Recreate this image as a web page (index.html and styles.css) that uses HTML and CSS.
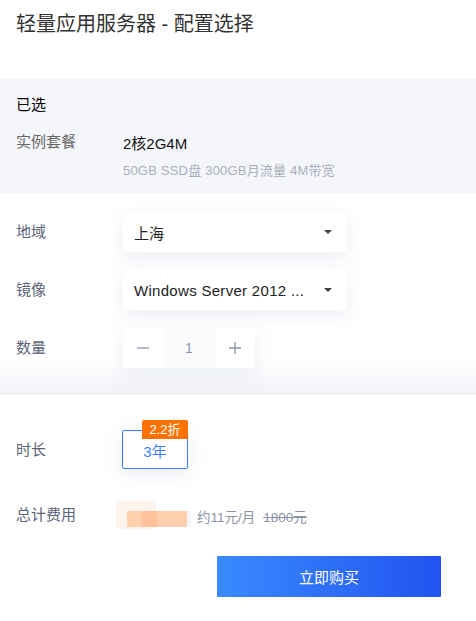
FILE: index.html
```html
<!DOCTYPE html>
<html lang="zh">
<head>
<meta charset="utf-8">
<link rel="stylesheet" href="styles.css">
</head>
<body>
<div class="page">
  <h1 class="title">轻量应用服务器 - 配置选择</h1>

  <section class="selected">
    <div class="sel-head">已选</div>
    <div class="sel-row">
      <div class="label">实例套餐</div>
      <div class="sel-info">
        <div class="plan">2核2G4M</div>
        <div class="plan-desc">50GB SSD盘 300GB月流量 4M带宽</div>
      </div>
    </div>
  </section>

  <section class="config">
    <div class="row">
      <div class="label label-blue">地域</div>
      <div class="select">
        <span class="select-text">上海</span>
        <span class="caret"></span>
      </div>
    </div>
    <div class="row">
      <div class="label label-blue">镜像</div>
      <div class="select">
        <span class="select-text latin">Windows Server 2012 ...</span>
        <span class="caret"></span>
      </div>
    </div>
    <div class="row">
      <div class="label label-blue">数量</div>
      <div class="stepper">
        <div class="step-btn">
          <svg width="14" height="14" viewBox="0 0 14 14"><path d="M1 7h12" stroke="#8a93a6" stroke-width="1.3"/></svg>
        </div>
        <div class="step-val">1</div>
        <div class="step-btn">
          <svg width="14" height="14" viewBox="0 0 14 14"><path d="M1 7h12M7 1v12" stroke="#8a93a6" stroke-width="1.3"/></svg>
        </div>
      </div>
    </div>
  </section>

  <section class="order">
    <div class="row row-duration">
      <div class="label label-blue">时长</div>
      <div class="duration">
        <span class="badge">2.2折</span>
        <span class="duration-text">3年</span>
      </div>
    </div>
    <div class="row row-total">
      <div class="label label-blue">总计费用</div>
      <div class="price">
        <span class="price-blur"><i class="pb pb1"></i><i class="pb pb2"></i><i class="pb pb3"></i><i class="pb pb4"></i></span>
        <span class="per-month">约11元/月</span>
        <span class="orig">1800元</span>
      </div>
    </div>
    <div class="actions">
      <button class="buy">立即购买</button>
    </div>
  </section>
</div>
</body>
</html>
```

FILE: styles.css
```css
* { box-sizing: border-box; }
html, body { margin: 0; padding: 0; background: #fff; }
body {
  font-family: "Liberation Sans", "Noto Sans CJK SC", sans-serif;
  color: #333;
  width: 476px;
  height: 621px;
  overflow: hidden;
}
.title {
  margin: 0;
  padding: 12px 16px 0;
  height: 79px;
  font-size: 20px;
  line-height: 24px;
  font-weight: 400;
  color: #333;
}
.label {
  width: 107px;
  flex: none;
  font-size: 15px;
  line-height: 20px;
  color: #666;
}
.label-blue { color: #5b6478; }

.selected {
  background: #f5f6fa;
  height: 114px;
  padding: 15px 16px 0;
}
.sel-head {
  font-size: 15px;
  line-height: 22px;
  color: #000;
}
.sel-row {
  display: flex;
  margin-top: 16px;
}
.plan {
  font-size: 15px;
  line-height: 20px;
  color: #111;
  margin-top: 2px;
}
.plan-desc {
  font-size: 13px;
  line-height: 18px;
  color: #a9afbd;
  margin-top: 8px;
  letter-spacing: 0.2px;
}

.config {
  height: 202px;
  padding: 19px 16px 0;
  background: linear-gradient(to bottom, #fff 0, #fff 82%, #f0f2f7 100%);
  display: flex;
  flex-direction: column;
  gap: 18px;
}
.row {
  display: flex;
  align-items: center;
  height: 40px;
}
.select {
  width: 224px;
  height: 40px;
  background: #fff;
  display: flex;
  align-items: center;
  justify-content: space-between;
  padding: 0 15px 0 11px;
  box-shadow: 0 6px 18px rgba(200, 208, 225, 0.35);
}
.select-text {
  font-size: 15px;
  color: #222;
}
.select-text.latin { letter-spacing: 0.3px; }
.caret {
  width: 0;
  height: 0;
  border-left: 4px solid transparent;
  border-right: 4px solid transparent;
  border-top: 4px solid #3a4150;
}
.stepper {
  display: flex;
  height: 40px;
  box-shadow: 0 6px 18px rgba(200, 208, 225, 0.35);
}
.step-btn {
  width: 40px;
  height: 40px;
  background: #fff;
  display: flex;
  align-items: center;
  justify-content: center;
}
.step-val {
  width: 52px;
  height: 40px;
  display: flex;
  align-items: center;
  justify-content: center;
  font-size: 14px;
  color: #8a93a6;
  background: #fafbfd;
}

.order {
  padding: 35px 16px 0;
  background: #fff;
}
.row-duration { height: 39px; }
.duration {
  position: relative;
  width: 66px;
  height: 39px;
  margin-left: -1px;
  border: 1px solid #3d7ff5;
  border-radius: 2px;
  display: flex;
  align-items: center;
  justify-content: center;
  box-shadow: 0 4px 20px rgba(200, 208, 225, 0.4);
}
.duration-text {
  font-size: 15px;
  color: #3d7ff5;
  margin-top: 2px;
}
.badge {
  position: absolute;
  right: -1px;
  top: -11px;
  width: 46px;
  height: 19px;
  background: #ff7200;
  color: #fff;
  font-size: 13px;
  line-height: 19px;
  text-align: center;
  border-radius: 2px 2px 0 0;
}
.row-total {
  margin-top: 26px;
  height: 40px;
}
.price {
  display: flex;
  align-items: center;
  margin-left: -11px;
}
.price-blur {
  position: relative;
  width: 78px;
  height: 28px;
  display: block;
  margin-right: 7px;
}
.pb { position: absolute; display: block; }
.pb1 { left: 4px; top: 0; width: 40px; height: 28px; background: #fff4ec; }
.pb2 { left: 15px; top: 10px; width: 60px; height: 16px; background: #ffcfae; }
.pb3 { left: 30px; top: 10px; width: 15px; height: 16px; background: #ffc29a; }
.pb4 { left: 75px; top: 10px; width: 4px; height: 16px; background: #f6f6f8; }
.per-month {
  font-size: 13.5px;
  color: #8a93a6;
  margin-top: 2px;
}
.orig {
  font-size: 13.5px;
  color: #8a93a6;
  margin-left: 8px;
  text-decoration: line-through;
  margin-top: 2px;
}
.actions {
  display: flex;
  justify-content: flex-end;
  margin-top: 21px;
  padding-right: 19px;
}
.buy {
  width: 224px;
  height: 41px;
  border: 0;
  border-radius: 1px;
  background: linear-gradient(to right, #3a8bff, #2153f0);
  color: #fff;
  font-family: inherit;
  font-size: 15px;
}
```
